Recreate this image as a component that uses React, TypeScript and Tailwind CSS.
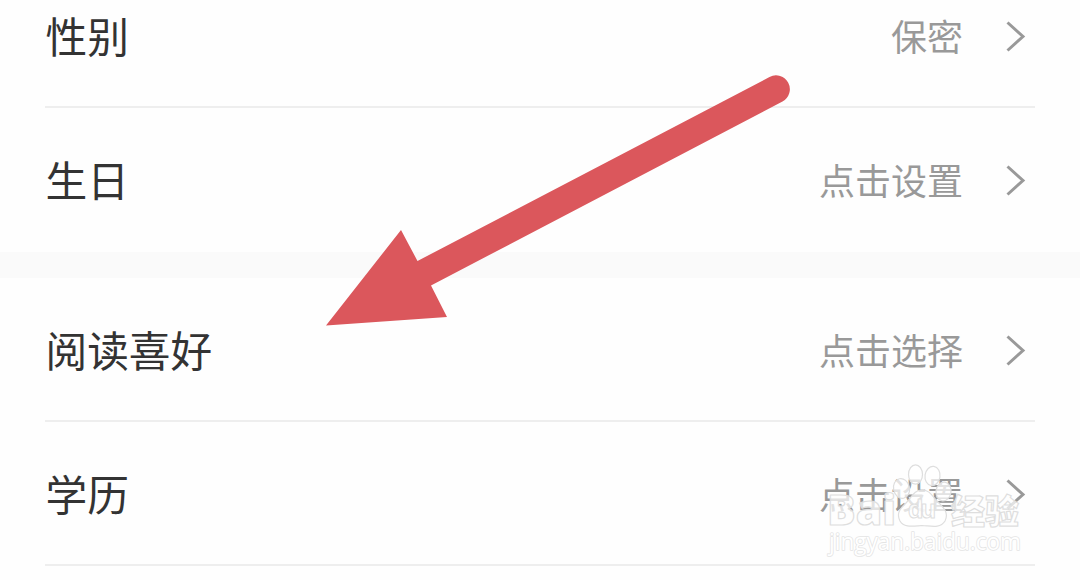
type RowProps = {
    label: string;
    value: string;
    divider?: boolean;
};

const Row = ({ label, value, divider = true }: RowProps) => {
    return (
        <div className="relative h-36 shrink-0 flex items-center justify-between pl-[45.5px] pr-[54px]">
            <span className="text-[41.7px] leading-none text-[#333333] whitespace-nowrap">{label}</span>
            <div className="flex items-center gap-[42px]">
                <span className="-mt-0.5 text-[36px] leading-none text-[#999999] whitespace-nowrap">{value}</span>
                <svg className="w-[21px] h-[34px] mt-px" viewBox="0 0 21 34" fill="none">
                    <path d="M2.5 2.5L18 16.5L2.5 30.5" stroke="#999999" strokeWidth="3" />
                </svg>
            </div>
            {divider && <div className="absolute left-[45px] right-[45px] bottom-0 h-0.5 bg-[#eeeeee]"></div>}
        </div>
    );
};

const Arrow = () => (
    <svg className="absolute inset-0 w-[1080px] h-[580px]" viewBox="0 0 1080 580">
        <path
            d="M326 325.5L401 230L417.5 261L769.5 77A13.8 13.8 0 0 1 782.5 101.5L431 285.5L447 317Z"
            fill="#db575c"
        />
    </svg>
);

const Watermark = () => (
    <svg
        className="absolute left-[820px] top-[455px] w-[220px] h-[110px]"
        viewBox="820 455 220 110"
        fill="#ffffff"
        fillOpacity="0.72"
        stroke="#dedede"
        strokeWidth="1.2"
        strokeLinejoin="round"
    >
        {/* Paw */}
        <ellipse cx="901.5" cy="488.5" rx="8" ry="10" transform="rotate(-12 901.5 488.5)" />
        <ellipse cx="915.5" cy="474.5" rx="7" ry="9.7" />
        <ellipse cx="932.5" cy="476" rx="7.5" ry="9.7" transform="rotate(8 932.5 476)" />
        <ellipse cx="943.5" cy="491.5" rx="7.5" ry="9.5" transform="rotate(8 943.5 491.5)" />
        <path d="M922 490C914 490 912 497 906 503C898 510 897 515 900 521C904 528 913 526 922 525.5C931 526 940 529 945 521C949 513 944 508 938 502C932 496 930 490 922 490Z" />
        <text x="827" y="525" fontSize="43" textLength="69" lengthAdjust="spacingAndGlyphs" className="font-['Open_Sans',sans-serif] font-extrabold">
            Bai
        </text>
        <text x="908" y="518" fontSize="25" strokeWidth="1" textLength="28" className="font-['Liberation_Sans'] font-bold">du</text>
        <text x="951" y="524" fontSize="34" textLength="68" className="font-['Noto_Sans_CJK_SC',sans-serif] font-black">
            经验
        </text>
        <text x="829" y="550" fontSize="24" strokeWidth="1.6" fillOpacity="1" stroke="#e4e4e4" paintOrder="stroke" textLength="192" lengthAdjust="spacingAndGlyphs" className="font-['Open_Sans',sans-serif]">
            jingyan.baidu.com
        </text>
    </svg>
);

const App = () => {
    return (
        <main className="relative w-[1080px] h-[580px] overflow-hidden bg-[#fefefe] font-['Noto_Sans_CJK_SC',sans-serif]">
            <div className="flex flex-col -mt-9">
                <Row label="性别" value="保密" />
                <Row label="生日" value="点击设置" divider={false} />
                <div className="h-[26px] shrink-0 bg-[#fafafa]"></div>
                <Row label="阅读喜好" value="点击选择" />
                <Row label="学历" value="点击设置" />
            </div>
            <Arrow />
            <Watermark />
        </main>
    );
};

export default App;
